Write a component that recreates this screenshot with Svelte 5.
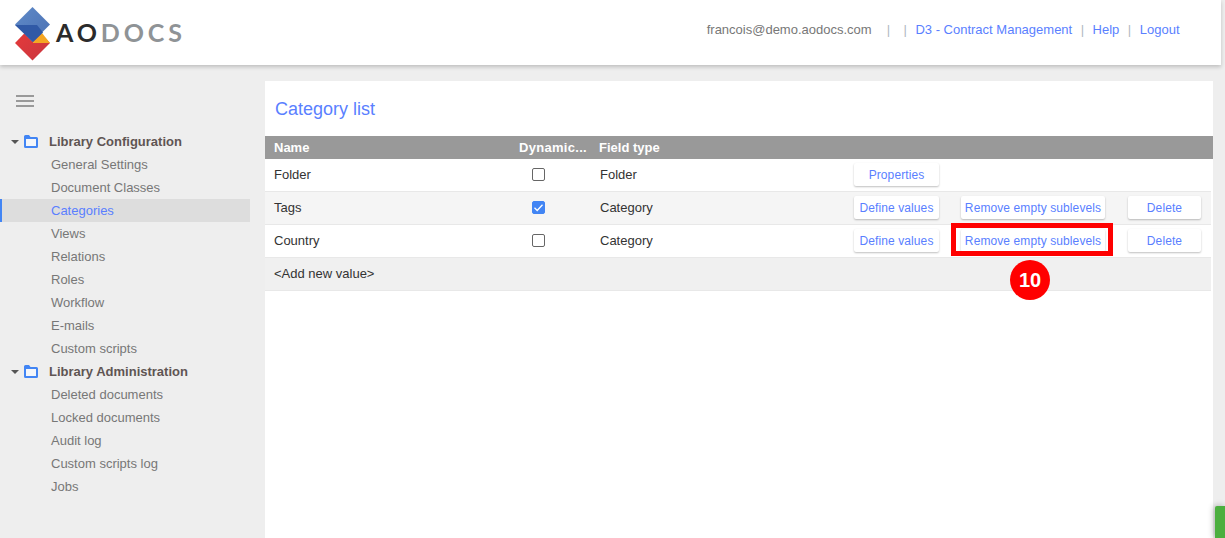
<script>
  const config = ['General Settings','Document Classes','Categories','Views','Relations','Roles','Workflow','E-mails','Custom scripts'];
  const admin = ['Deleted documents','Locked documents','Audit log','Custom scripts log','Jobs'];
  const rows = [
    { name:'Folder', checked:false, type:'Folder', actions:['define'] },
    { name:'Tags', checked:true, type:'Category', actions:['values','remove','delete'] },
    { name:'Country', checked:false, type:'Category', actions:['values','remove','delete'], mark:true }
  ];
</script>

{#snippet folder()}
  <svg class="folder" width="14" height="13" viewBox="0 0 14 13" aria-hidden="true">
    <path d="M0 1.500A1.500 1.500 0 0 1 1.500 0H5l1.500 2h6A1.500 1.500 0 0 1 14 3.500V11.500A1.500 1.500 0 0 1 12.500 13H1.500A1.500 1.500 0 0 1 0 11.500Z" fill="#4285f4"/>
    <rect x="2" y="4" width="10" height="7" fill="#f4f6fa"/>
  </svg>
{/snippet}

<div class="page">
  <header class="topbar">
    <div class="logo">
      <svg width="36" height="54" viewBox="0 0 36 54" aria-hidden="true">
        <defs>
          <linearGradient id="blue" x1="0" y1="0" x2="1" y2="1"><stop offset="0" stop-color="#5f8ac8"/><stop offset="1" stop-color="#4a70b3"/></linearGradient>
          <linearGradient id="red" x1="0" y1="0" x2="1" y2="1"><stop offset="0" stop-color="#e83a3a"/><stop offset="1" stop-color="#c9363f"/></linearGradient>
        </defs>
        <path d="M0 36 17.500 18 35 36 17.500 53.500Z" fill="url(#red)"/>
        <path d="M18 35 27 26 35 36H18Z" fill="#f5a623"/>
        <path d="M17.500 0 35 17.500 17.500 35 0 17.500Z" fill="url(#blue)"/>
        <path d="M0 18H22L28 25.500 18 35Z" fill="#3059a6"/>
      </svg>
      <span class="word"><b>AO</b>DOCS</span>
    </div>
    <nav class="toplinks">
      <span class="user">francois@demo.aodocs.com</span>
      <i class="sep first">|</i><i class="sep second">|</i>
      <a href="#d3">D3 - Contract Management</a>
      <i class="sep">|</i>
      <a href="#help">Help</a>
      <i class="sep">|</i>
      <a href="#logout">Logout</a>
    </nav>
  </header>

  <div class="body">
    <aside class="side">
      <div class="burger"><span></span><span></span><span></span></div>
      <div class="group"><span class="caret"></span>{@render folder()}<strong>Library Configuration</strong></div>
      {#each config as item}
        <a href="#item" class="item" class:active={item === 'Categories'}>{item}</a>
      {/each}
      <div class="group"><span class="caret"></span>{@render folder()}<strong>Library Administration</strong></div>
      {#each admin as item}
        <a href="#item" class="item">{item}</a>
      {/each}
    </aside>

    <main class="panel">
      <h1>Category list</h1>
      <div class="thead">
        <span>Name</span><span class="dyn">Dynamic...</span><span>Field type</span>
      </div>
      {#each rows as row, i}
        <div class="row" class:alt={i % 2 === 1}>
          <span>{row.name}</span>
          <span class="check" class:on={row.checked}>
            {#if row.checked}
              <svg width="13" height="13" viewBox="0 0 13 13" aria-hidden="true"><path d="M2.500 6.800 5.200 9.500 10.500 3.800" fill="none" stroke="#fff" stroke-width="1.300"/></svg>
            {/if}
          </span>
          <span class="type">{row.type}</span>
          {#if row.actions[0] === 'define'}
            <button class="b1">Properties</button>
          {:else}
            <button class="b1">Define values</button>
            <span class="markwrap">
              <button class="b2">Remove empty sublevels</button>
              {#if row.mark}<span class="redbox"></span><span class="badge">10</span>{/if}
            </span>
            <button class="b3">Delete</button>
          {/if}
        </div>
      {/each}
      <div class="row add"><span>&lt;Add new value&gt;</span></div>
    </main>
  </div>
  <div class="corner"></div>
</div>

<style>
  :global(body) { margin: 0; background: #eee; }
  .page {
    position: relative;
    width: 1225px;
    height: 538px;
    overflow: hidden;
    background: #eee;
    font-family: "Liberation Sans", Arial, sans-serif;
    font-size: 13px;
    color: #333;
  }
  .topbar {
    position: relative;
    z-index: 1;
    box-sizing: border-box;
    width: 1221px;
    height: 65px;
    background: #fff;
    box-shadow: 0 2px 4px rgba(0,0,0,.2);
    display: flex;
    align-items: flex-start;
    justify-content: space-between;
  }
  .logo {
    display: flex;
    align-items: center;
    padding: 7px 0 0 15px;
  }
  .word {
    margin: -3px 0 0 5px;
    font-family: Lato, sans-serif;
    font-size: 25px;
    font-weight: 700;
    letter-spacing: 3.9px;
    color: #8f9396;
    line-height: 1;
  }
  .word b { font-weight: 700; color: #2b2b2b; }
  .toplinks {
    display: flex;
    align-items: baseline;
    padding: 22px 41.5px 0 0;
    font-size: 13px;
    line-height: 16px;
    color: #777;
  }
  .toplinks a { color: #5a7fff; text-decoration: none; }
  .sep { font-style: normal; color: #b0b8c0; margin: 0 8.5px; }
  .sep.first { margin: 0 0 0 15px; }
  .sep.second { margin: 0 8.5px 0 13.5px; }
  .body { display: flex; align-items: stretch; height: 473px; }
  .side { width: 265px; flex: none; box-sizing: border-box; padding-top: 30px; }
  .burger { display: flex; flex-direction: column; gap: 3px; margin-left: 16px; width: 18px; height: 12px; margin-bottom: 23px; }
  .burger span { display: block; height: 2px; background: #999; }
  .group {
    display: flex;
    align-items: center;
    height: 23px;
    padding-left: 11px;
    font-size: 13px;
    color: #5f5553;
  }
  .caret {
    width: 0; height: 0;
    border: 4px solid transparent;
    border-top-color: #555;
    border-bottom: 0;
    margin-right: 5px;
  }
  .folder { margin-right: 11px; flex: none; }
  .item {
    display: block;
    box-sizing: border-box;
    width: 250px;
    height: 23px;
    line-height: 23px;
    padding-left: 51px;
    color: #777;
    text-decoration: none;
  }
  .item.active {
    background: #ddd;
    color: #5a7fff;
    border-left: 2px solid #4285f4;
    padding-left: 49px;
  }
  .panel {
    flex: none;
    width: 948px;
    margin-top: 16px;
    background: #fff;
    box-sizing: border-box;
  }
  h1 {
    margin: 0;
    height: 55px;
    box-sizing: border-box;
    padding: 17px 0 0 10px;
    font-size: 18px;
    line-height: 22px;
    font-weight: 400;
    color: #5a7fff;
  }
  .thead {
    display: grid;
    grid-template-columns: 245px 80px 1fr;
    align-items: center;
    height: 23px;
    padding-left: 9px;
    background: #999;
    color: #fff;
    font-weight: 700;
  }
  .dyn { letter-spacing: .3px; }
  .row {
    position: relative;
    box-sizing: border-box;
    width: 946px;
    height: 33px;
    display: grid;
    grid-template-columns: 245px 80px 255px 85px 22px 144px 23px 73px;
    align-items: center;
    padding: 0 0 1px 9px;
    border-bottom: 1px solid #e8e8e8;
    color: #333;
  }
  .row > :nth-child(2) { grid-column: 2; }
  .row > :nth-child(3) { grid-column: 3; }
  .row > .b1 { grid-column: 4; }
  .row > .markwrap { grid-column: 6; }
  .row > .b3 { grid-column: 8; }
  .row.alt { background: #f5f5f5; }
  .row.add { background: #f0f0f0; display: flex; }
  .type { padding-left: 1px; }
  .check {
    box-sizing: border-box;
    width: 13px;
    height: 13px;
    margin-left: 13px;
    border: 1px solid #666;
    border-radius: 2px;
    background: #fff;
    display: block;
  }
  .check.on { background: #4285f4; border-color: #4285f4; position: relative; }
  .check svg { display: block; margin: -1px; }
  button {
    box-sizing: border-box;
    height: 23px;
    padding: 0;
    border: 0;
    border-radius: 2px;
    background: #fff;
    color: #5a7fff;
    font: 12px "Liberation Sans", Arial, sans-serif;
    letter-spacing: .1px;
    box-shadow: 0 1px 2px rgba(0,0,0,.25);
    display: block;
  }
  .b1 { width: 85px; }
  .b2 { width: 144px; }
  .b3 { width: 73px; }
  .markwrap { position: relative; display: block; width: 144px; z-index: 2; }
  .redbox {
    position: absolute;
    left: -10px;
    top: -6px;
    width: 162px;
    height: 33px;
    box-sizing: border-box;
    border: 5px solid #f00;
  }
  .badge {
    position: absolute;
    left: 49px;
    top: 31px;
    width: 40px;
    height: 40px;
    border-radius: 50%;
    background: #f00;
    color: #fff;
    font-weight: 700;
    font-size: 20px;
    line-height: 40px;
    text-align: center;
  }
  .corner {
    position: absolute;
    right: 0;
    bottom: 0;
    width: 10px;
    height: 32px;
    background: #4caf3f;
    box-shadow: -1px 0 6px rgba(0,0,0,.3);
    border-top-left-radius: 2px;
  }
</style>
